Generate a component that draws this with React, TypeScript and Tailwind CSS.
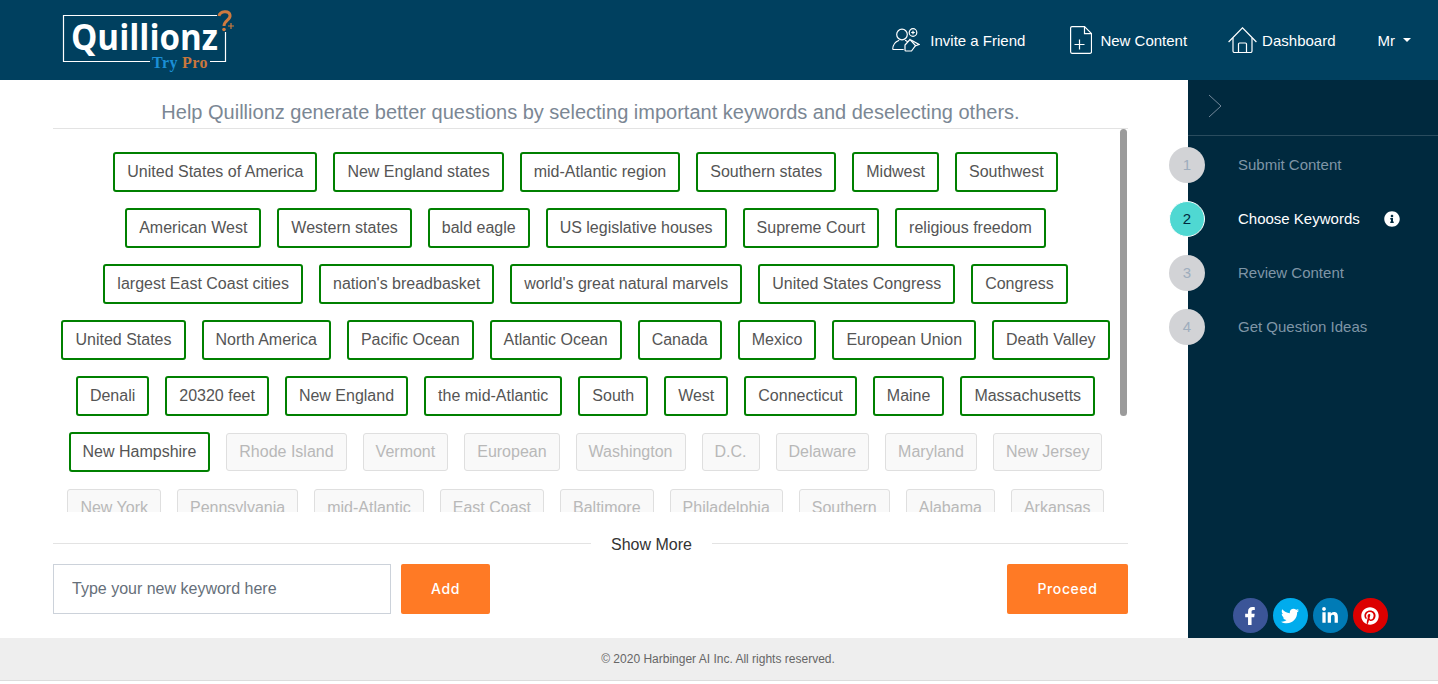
import { FaFacebookF, FaInfoCircle, FaLinkedinIn, FaPinterest, FaTwitter } from "react-icons/fa";

const selected = [
  "United States of America", "New England states", "mid-Atlantic region", "Southern states", "Midwest", "Southwest",
  "American West", "Western states", "bald eagle", "US legislative houses", "Supreme Court", "religious freedom",
  "largest East Coast cities", "nation's breadbasket", "world's great natural marvels", "United States Congress", "Congress",
  "United States", "North America", "Pacific Ocean", "Atlantic Ocean", "Canada", "Mexico", "European Union", "Death Valley",
  "Denali", "20320 feet", "New England", "the mid-Atlantic", "South", "West", "Connecticut", "Maine", "Massachusetts",
  "New Hampshire",
];

const others = [
  "Rhode Island", "Vermont", "European", "Washington", "D.C.", "Delaware", "Maryland", "New Jersey",
  "New York", "Pennsylvania", "mid-Atlantic", "East Coast", "Baltimore", "Philadelphia", "Southern", "Alabama", "Arkansas",
];

const steps = [
  { n: 1, label: "Submit Content" },
  { n: 2, label: "Choose Keywords", active: true },
  { n: 3, label: "Review Content" },
  { n: 4, label: "Get Question Ideas" },
];

function Logo() {
  return (
    <svg width="180" height="72" viewBox="0 0 180 72" className="ml-[58px] mt-2" fill="none">
      <path d="M159 7.500H5.500v46H92M152 53.500h15.500V24" stroke="#fff" strokeWidth="1.200" />
      <text x="13" y="42" fill="#fff" fontSize="36" fontWeight="700" fontFamily="Open Sans, sans-serif" textLength="147" lengthAdjust="spacingAndGlyphs">
        Quillionz
      </text>
      <text x="94" y="60" fill="#1b8fd6" fontSize="16" fontWeight="700" fontFamily="Liberation Serif, serif" letterSpacing="0.5">Try</text>
      <text x="124" y="60" fill="#c9773d" fontSize="16" fontWeight="700" fontFamily="Liberation Serif, serif" letterSpacing="0.5">Pro</text>
      <path d="M161 8c1-5 10-6 11-1 1 5-6 5-6 11" stroke="#cf7a3f" strokeWidth="3" />
      <circle cx="166" cy="21.500" r="1.800" fill="#cf7a3f" />
      <path d="M170 18h6M173 15v6" stroke="#cf7a3f" strokeWidth="1.200" />
    </svg>
  );
}

function InviteIcon() {
  return (
    <svg width="28" height="24" viewBox="0 0 28 24" fill="none" stroke="#fff" strokeWidth="1.200">
      <circle cx="10" cy="6.500" r="5.300" />
      <path d="M.7 21.500c0-5 3-8 6.500-9.300M13 12.200c1 .4 2 .9 2.700 1.500M.7 21.500h11" />
      <circle cx="21" cy="4.500" r="3.800" />
      <path d="M21 2.700v3.600M19.200 4.500h3.600" />
      <path d="M18 11.500l-5 5.500v5a1 1 0 0 0 1 1h5.500l4-5.500z" />
      <path d="M19 12l8 4.500-4 1.500" />
    </svg>
  );
}

function FileIcon() {
  return (
    <svg width="22" height="28" viewBox="0 0 22 28" fill="none" stroke="#fff" strokeWidth="1.200">
      <path d="M2 .6h12.500l7 7v18.200a1.500 1.500 0 0 1-1.500 1.500H2A1.500 1.500 0 0 1 .6 25.800V2A1.500 1.500 0 0 1 2 .6z" />
      <path d="M14.500.6v7h7" />
      <path d="M4.500 18.500h10M9.500 13.500v10" />
    </svg>
  );
}

function HouseIcon() {
  return (
    <svg width="29" height="26" viewBox="0 0 29 26" fill="none" stroke="#fff" strokeWidth="1.200">
      <path d="M.6 15L14.500.8 28.400 15" />
      <path d="M5 11v13a1.500 1.500 0 0 0 1.500 1.500h16A1.500 1.500 0 0 0 24 24V11" />
      <path d="M10.500 25.500V17a1 1 0 0 1 1-1h6a1 1 0 0 1 1 1v8.500" />
    </svg>
  );
}

function NavItem({ icon, label, className }: { icon: React.ReactNode; label: string; className: string }) {
  return (
    <a className={`flex items-center text-[15px] text-white ${className}`}>
      {icon}
      <span className="pt-[2px]">{label}</span>
    </a>
  );
}

function Keyword({ label, on }: { label: string; on?: boolean }) {
  return (
    <span
      className={
        on
          ? "flex h-10 items-center rounded-[3px] border-2 border-[#008000] bg-white px-3 text-[16px] text-[#555]"
          : "my-px flex h-[38px] items-center rounded-[3px] border border-[#dfdfdf] bg-[#f9f9f9] px-3 text-[16px] text-[#b8b8b8]"
      }
    >
      {label}
    </span>
  );
}

export default function App() {
  return (
    <div className="flex h-[684px] flex-col overflow-hidden bg-white font-['Liberation_Sans',sans-serif]">
      <header className="flex h-20 shrink-0 items-center bg-[#00405f]">
        <Logo />
        <nav className="ml-auto flex items-center pr-[27px]">
          <NavItem icon={<span className="mr-[10px] flex"><InviteIcon /></span>} label="Invite a Friend" className="mr-[45px]" />
          <NavItem icon={<span className="mr-2 flex"><FileIcon /></span>} label="New Content" className="mr-[41px]" />
          <NavItem icon={<span className="mr-[5px] flex"><HouseIcon /></span>} label="Dashboard" className="mr-[42px]" />
          <span className="flex items-center pt-[2px] text-[15px] text-white">
            Mr
            <span className="mb-[3px] ml-2 h-0 w-0 border-x-[4.500px] border-t-[4.500px] border-x-transparent border-t-white" />
          </span>
        </nav>
      </header>

      <div className="flex h-[558px] shrink-0">
        <main className="flex w-[1188px] flex-col pl-[53px] pr-[60px]">
          <h1 className="flex h-[49px] shrink-0 items-center justify-center border-b border-[#e3e3e3] pt-4 text-[20px] font-normal text-[#7b8794]">
            Help Quillionz generate better questions by selecting important keywords and deselecting others.
          </h1>
          <div className="relative h-[383px] shrink-0 overflow-hidden">
            <div className="flex flex-wrap justify-center gap-4 pt-[23px] pr-[10px]">
              {selected.map((k) => (
                <Keyword key={k} label={k} on />
              ))}
              {others.map((k) => (
                <Keyword key={k} label={k} />
              ))}
            </div>
            <span className="absolute top-0 right-px h-[287px] w-[7px] rounded-[4px] bg-[#9b9b9b]" />
          </div>
          <div className="mt-[21px] flex h-[20px] shrink-0 items-center">
            <span className="h-px w-[538px] bg-[#e3e3e3]" />
            <span className="px-5 pt-1 text-[16px] text-[#333]">Show More</span>
            <span className="h-px flex-1 bg-[#e3e3e3]" />
          </div>
          <div className="mt-[11px] flex shrink-0 items-center">
            <input
              placeholder="Type your new keyword here"
              className="h-[50px] w-[338px] border border-[#ccd2da] px-[18px] text-[16px] outline-none placeholder:text-[#666f7a]"
            />
            <button className="ml-[10px] h-[50px] w-[89px] rounded-[2px] bg-[#ff7a25] pb-[2px] font-['Inter',sans-serif] text-[14px] font-medium tracking-[0.6px] text-white">
              Add
            </button>
            <button className="ml-auto h-[50px] w-[121px] rounded-[2px] bg-[#ff7a25] pb-[2px] font-['Inter',sans-serif] text-[14px] font-medium tracking-[0.6px] text-white">
              Proceed
            </button>
          </div>
        </main>

        <aside className="flex flex-1 flex-col bg-[#00293e]">
          <div className="flex h-14 shrink-0 items-center border-b border-[#2a4c5e] pb-1 pl-5">
            <svg width="14" height="24" viewBox="0 0 14 24" fill="none" stroke="#74889a" strokeWidth="1">
              <path d="M1 1l12 11L1 23" />
            </svg>
          </div>
          <ol className="mt-[11px] flex flex-col gap-[18px]">
            {steps.map((s) => (
              <li key={s.n} className="flex h-9 items-center">
                <span
                  className={
                    s.active
                      ? "-ml-[19px] flex h-9 w-9 items-center justify-center rounded-full border border-white bg-[#4fd8d2] text-[15px] text-[#00293e]"
                      : "-ml-[19px] flex h-9 w-9 items-center justify-center rounded-full bg-[#d2d3d6] text-[15px] text-[#9eadbd]"
                  }
                >
                  {s.n}
                </span>
                <span className={`ml-[33px] text-[15px] ${s.active ? "text-white" : "text-[#7f95a6]"}`}>{s.label}</span>
                {s.active && <FaInfoCircle className="ml-6 text-[16px] text-white" />}
              </li>
            ))}
          </ol>
          <div className="mt-auto mb-[5px] flex justify-center gap-[5px] pr-[6px] text-white">
            <a className="flex h-[35px] w-[35px] items-center justify-center rounded-full bg-[#3b5598] text-[18px]"><FaFacebookF /></a>
            <a className="flex h-[35px] w-[35px] items-center justify-center rounded-full bg-[#00aced] text-[18px]"><FaTwitter /></a>
            <a className="flex h-[35px] w-[35px] items-center justify-center rounded-full bg-[#007bb6] text-[18px]"><FaLinkedinIn /></a>
            <a className="flex h-[35px] w-[35px] items-center justify-center rounded-full bg-[#dc0000] text-[18px]"><FaPinterest /></a>
          </div>
        </aside>
      </div>

      <footer className="flex h-[43px] shrink-0 items-center justify-center border-b border-[#dcdcdc] bg-[#eeeeee] pr-[2px] text-[12px] text-[#666]">
        © 2020 Harbinger AI Inc. All rights reserved.
      </footer>
    </div>
  );
}
